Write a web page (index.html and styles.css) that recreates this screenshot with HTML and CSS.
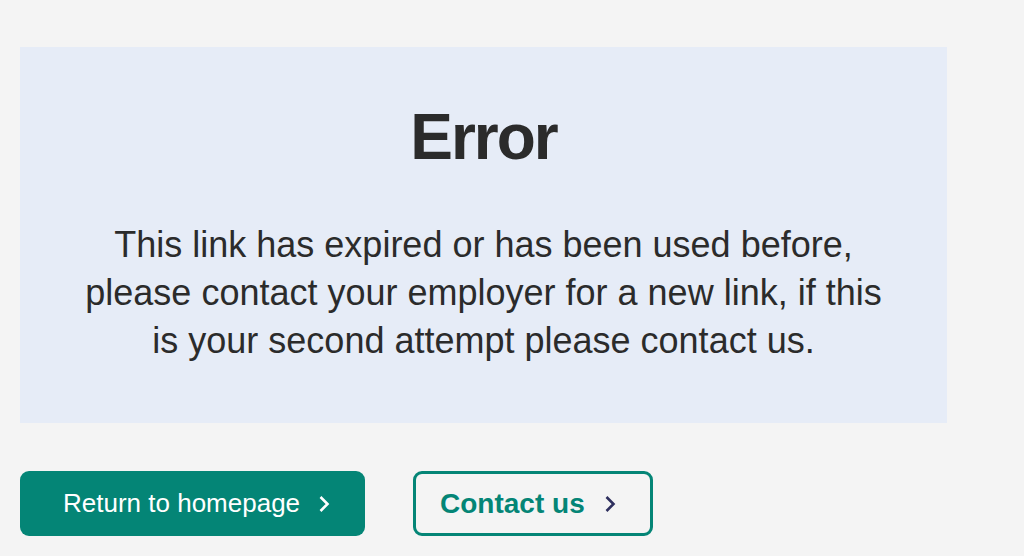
FILE: index.html
```html
<!DOCTYPE html>
<html lang="en">
<head>
<meta charset="utf-8">
<title>Error</title>
<link rel="stylesheet" href="styles.css">
</head>
<body>
<main class="page">
  <section class="panel">
    <h1 class="title">Error</h1>
    <p class="message">This link has expired or has been used before, please contact your employer for a new link, if this is your second attempt please contact us.</p>
  </section>
  <div class="actions">
    <a class="btn btn-primary" href="#">Return to homepage
      <svg class="chev" width="12" height="18" viewBox="0 0 12 18"><path d="M2.5 2 L9.5 9 L2.5 16" fill="none" stroke="currentColor" stroke-width="2.6"/></svg>
    </a>
    <a class="btn btn-secondary" href="#">Contact us
      <svg class="chev chev-dark" width="12" height="18" viewBox="0 0 12 18"><path d="M2.5 2 L9.5 9 L2.5 16" fill="none" stroke="currentColor" stroke-width="2.6"/></svg>
    </a>
  </div>
</main>
</body>
</html>
```

FILE: styles.css
```css
html, body {
  margin: 0;
  padding: 0;
  background: #f4f4f4;
  font-family: "Liberation Sans", Arial, sans-serif;
  color: #2b2b2b;
}
.page {
  padding: 47px 0 0 20px;
  width: 927px;
}
.panel {
  background: #e6ecf7;
  height: 376px;
  box-sizing: border-box;
  padding: 50px 40px 0;
  text-align: center;
}
.title {
  margin: 0;
  font-size: 64px;
  line-height: 80px;
  font-weight: 700;
  letter-spacing: -2px;
}
.message {
  margin: 44px auto 0;
  font-size: 36px;
  line-height: 48px;
  max-width: 820px;
}
.actions {
  display: flex;
  gap: 48px;
  margin-top: 48px;
}
.btn {
  display: flex;
  align-items: center;
  box-sizing: border-box;
  height: 65px;
  border-radius: 9px;
  text-decoration: none;
}
.btn-primary {
  background: #048576;
  color: #ffffff;
  font-size: 26px;
  padding: 0 35px 0 43px;
  gap: 18px;
}
.btn-secondary {
  border: 3px solid #048576;
  color: #048576;
  font-size: 28px;
  font-weight: 700;
  padding: 0 34px 0 24px;
  gap: 19px;
}
.chev {
  display: block;
}
.chev-dark {
  color: #2e2f5e;
}
```
